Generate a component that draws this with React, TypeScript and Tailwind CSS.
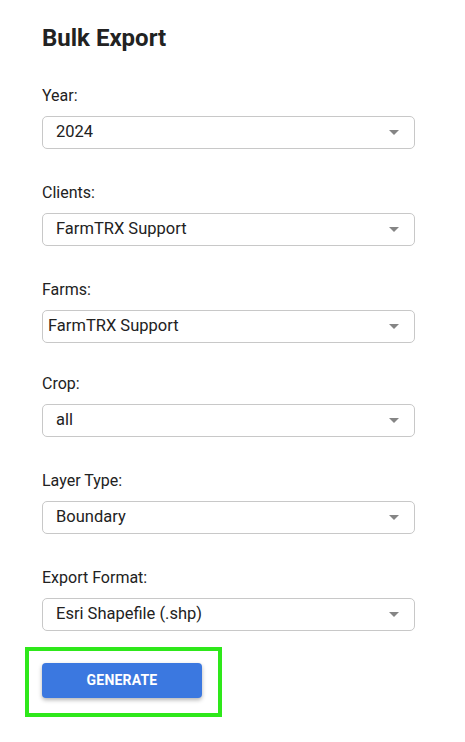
import React from "react";

type Field = {
  label: string;
  value: string;
  inset?: "wide" | "narrow";
  tight?: boolean;
};

const fields: Field[] = [
  { label: "Year:", value: "2024" },
  { label: "Clients:", value: "FarmTRX Support" },
  { label: "Farms:", value: "FarmTRX Support", inset: "narrow" },
  { label: "Crop:", value: "all", tight: true },
  { label: "Layer Type:", value: "Boundary" },
  { label: "Export Format:", value: "Esri Shapefile (.shp)" },
];

function Caret() {
  return (
    <svg width="10" height="5" viewBox="0 0 10 5" className="shrink-0">
      <path d="M0 0h10L5 5z" fill="#858585" />
    </svg>
  );
}

function SelectBox({ value, inset }: { value: string; inset?: Field["inset"] }) {
  return (
    <div
      className={`flex h-[33px] items-center justify-between rounded-[5px] border border-[#c8c8c8] bg-white pr-[15px] ${
        inset === "narrow" ? "pl-[5px]" : "pl-[13px]"
      }`}
    >
      <span className="text-[16.5px] text-[#222]">{value}</span>
      <Caret />
    </div>
  );
}

export default function App() {
  return (
    <div
      className="min-h-screen bg-white text-[#222]"
      style={{ fontFamily: "Roboto, 'Liberation Sans', sans-serif" }}
    >
      <div className="w-[373px] pl-[42px] pt-[24px] box-content">
        <h1 className="text-[24px] font-bold leading-[28px]">Bulk Export</h1>

        <div className="mt-[34px] flex flex-col">
          {fields.map((f, i) => (
            <div
              key={f.label}
              className={i === 0 ? "" : f.tight ? "mt-[31px]" : "mt-[34px]"}
            >
              <label className="block text-[16px] leading-[20px]">{f.label}</label>
              <div className="mt-[10px]">
                <SelectBox value={f.value} inset={f.inset} />
              </div>
            </div>
          ))}
        </div>
      </div>

      {/* 生成ボタン（緑枠で強調） */}
      <div className="ml-[25px] mt-[16px] w-[197px] border-4 border-[#2ee81a] pt-[12px] pb-[15px] pl-[13px]">
        <button className="h-[35px] w-[160px] rounded-[4px] bg-[#3b78e0] text-[14px] font-bold tracking-[0.2px] text-white shadow-[0_2px_4px_rgba(0,0,0,0.3)]">
          GENERATE
        </button>
      </div>
    </div>
  );
}
